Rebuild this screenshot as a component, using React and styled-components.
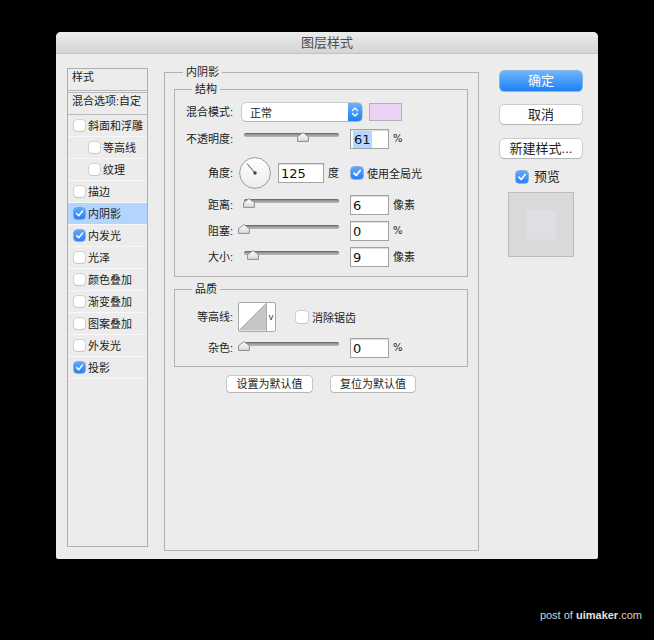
import React from 'react';
import styled, { createGlobalStyle } from 'styled-components';

const Global = createGlobalStyle`
  html, body { margin: 0; padding: 0; background: #000; }
  body { font-family: "Liberation Sans", "Noto Sans CJK SC", sans-serif; color: #222; }
  * { box-sizing: border-box; }
`;

const Screen = styled.div`
  width: 654px; height: 640px; padding: 32px 0 0 56px; background: #000; overflow: hidden;
`;

const Window = styled.div`
  width: 542px; height: 527px; background: #ececec; border-radius: 5px 5px 2px 2px;
  display: flex; flex-direction: column; overflow: hidden;
`;

const TitleBar = styled.div`
  height: 22px; flex: none; border-bottom: 1px solid #c2c2c2;
  background: linear-gradient(#ececec, #d4d4d4);
  display: flex; align-items: center; justify-content: center;
  font-size: 13px; color: #4d4d4d; line-height: 16px;
`;

const Body = styled.div`
  display: flex; align-items: flex-start; padding: 10px 0 0 11px;
`;

/* ---------- left list ---------- */
const StyleList = styled.div`
  width: 81px; height: 479px; margin-top: 4px; flex: none;
  border: 1px solid #aeaeae; display: flex; flex-direction: column;
`;
const ListHeader = styled.div`
  height: 22px; padding-left: 4px; font-size: 11px; line-height: 16px;
  border-bottom: 1px solid #b9b9b9;
`;
const BlendRow = styled.div`
  height: 23px; margin-top: 1px; padding: 0 0 0 4px; font-size: 11px; line-height: 16px;
  border-top: 1px solid #b9b9b9; border-bottom: 1px solid #b9b9b9; white-space: nowrap;
`;
const ListItem = styled.div`
  height: 22px; display: flex; align-items: center; gap: 3px;
  padding-left: ${p => (p.$indent ? 21 : 6)}px;
  background: ${p => (p.$active ? '#b3d4fc' : 'transparent')};
  border-bottom: 1px solid #f7f7f7;
  font-size: 11px; line-height: 14px; white-space: nowrap;
`;

const Box = styled.span`
  width: ${p => p.$s}px; height: ${p => p.$s}px; flex: none; border-radius: 3px;
  display: inline-flex; align-items: center; justify-content: center;
  background: ${p => (p.$on ? 'linear-gradient(#5ea8fb, #2a80f5)' : '#fff')};
  box-shadow: ${p => (p.$on ? '0 0 0 0.5px #2e76d6' : '0 0 0 0.5px #b4b4b4, 0 1px 1px rgba(0,0,0,0.08)')};
`;

const Check = ({ on, s = 11 }) => (
  <Box $on={on} $s={s}>
    {on && (
      <svg width={s} height={s} viewBox="0 0 12 12">
        <path d="M3 6.2 L5.2 8.5 L9.2 3.4" fill="none" stroke="#fff" strokeWidth="1.7" strokeLinecap="round" strokeLinejoin="round" />
      </svg>
    )}
  </Box>
);

/* ---------- middle panel ---------- */
const Group = styled.fieldset`
  margin: ${p => p.$mt ?? 0}px 0 0 ${p => p.$ml ?? 0}px; min-width: 0;
  border: 1px solid #b2b2b2;
  padding: ${p => p.$pad};
  ${p => (p.$w ? `width: ${p.$w}px;` : '')}
  ${p => (p.$h ? `height: ${p.$h}px;` : '')}
  display: flex; flex-direction: column;
`;
const Legend = styled.legend`
  margin-left: ${p => p.$ml}px; padding: 0 3px; font-size: 11px; line-height: 16px; color: #222;
`;

const Row = styled.div`
  display: flex; align-items: center; height: ${p => p.$h}px; margin-top: ${p => p.$mt}px;
`;
const Label = styled.span`
  width: 52px; flex: none; text-align: right; font-size: 11px; line-height: 14px; white-space: nowrap;
`;
const Unit = styled.span`
  margin-left: ${p => p.$ml ?? 4}px; font-size: ${p => p.$fs ?? 11}px; line-height: 14px;
  font-family: ${p => (p.$latin ? '"DejaVu Sans", sans-serif' : 'inherit')}; white-space: nowrap;
`;

const Select = styled.div`
  width: 120px; height: 18px; margin-left: 9px; border-radius: 4px; background: #fff;
  box-shadow: 0 0 0 0.5px rgba(0,0,0,0.28), 0 1px 1px rgba(0,0,0,0.12);
  display: flex; align-items: center; font-size: 11px; padding-left: 8px;
`;
const SelectText = styled.span` flex: 1; `;
const Stepper = styled.span`
  width: 14px; height: 18px; border-radius: 0 4px 4px 0;
  background: linear-gradient(#6cb3fa, #1d7ff6);
  display: flex; align-items: center; justify-content: center;
`;
const Swatch = styled.div`
  width: 33px; height: 18px; margin-left: 7px; background: #e9d2f6; border: 1px solid #b3b3b3;
`;

const Field = styled.div`
  width: ${p => p.$w ?? 39}px; height: 20px; margin-left: ${p => p.$ml ?? 11}px; flex: none;
  background: #fff; border: 1px solid #a3a3a3; box-shadow: inset 0 1px 1px rgba(0,0,0,0.14);
  display: flex; align-items: center; padding-left: 2px;
  font-family: "DejaVu Sans", sans-serif; font-size: 13px; color: #111;
`;
const Selected = styled.span`
  background: #b3d7ff; padding: 0 1px; line-height: 17px;
`;

const SliderBox = styled.div`
  width: 95px; height: 20px; margin-left: 11px; padding-top: 4px; flex: none; align-self: center;
`;
const Track = styled.div`
  position: relative; height: 4px; border-radius: 2px;
  background: linear-gradient(#858585, #b9b9b9);
  box-shadow: inset 0 1px 1px rgba(0,0,0,0.25);
`;
const Thumb = styled.svg`
  position: absolute; top: -1px;
`;

const Slider = ({ pos }) => (
  <SliderBox>
    <Track>
      <Thumb width="12" height="10" viewBox="0 0 12 10" style={{ left: pos - 6 }}>
        <defs>
          <linearGradient id="tg" x1="0" y1="0" x2="0" y2="1">
            <stop offset="0" stopColor="#fdfdfd" />
            <stop offset="1" stopColor="#d9d9d9" />
          </linearGradient>
        </defs>
        <path d="M6 0.6 L11.4 4.6 L11.4 9.4 L0.6 9.4 L0.6 4.6 Z" fill="url(#tg)" stroke="#8c8c8c" strokeWidth="1" strokeLinejoin="round" />
      </Thumb>
    </Track>
  </SliderBox>
);

const Dial = styled.svg` margin-left: 6px; flex: none; `;

const Contour = styled.div`
  width: 38px; height: 30px; margin-left: 5px; display: flex; border: 1px solid #a9a9a9;
  border-radius: 2px; background: #fff; overflow: hidden;
`;
const ContourArrow = styled.span`
  width: 9px; border-left: 1px solid #a9a9a9; display: flex; align-items: center; justify-content: center;
  font-size: 9px; color: #333;
`;

const Ghost = styled.div`
  margin-left: ${p => p.$ml ?? 0}px; display: flex; align-items: center; gap: 4px; font-size: 11px;
`;

const ButtonRow = styled.div`
  display: flex; justify-content: center; gap: 19px; margin-top: 9px;
`;
const SmallButton = styled.div`
  width: ${p => p.$w}px; height: 16px; border-radius: 3px; background: #fff;
  box-shadow: 0 0 0 0.5px rgba(0,0,0,0.3), 0 1px 1px rgba(0,0,0,0.1);
  display: flex; align-items: center; justify-content: center; font-size: 11px; line-height: 14px;
`;

/* ---------- right column ---------- */
const Side = styled.div`
  width: 82px; margin: 7px 0 0 21px; display: flex; flex-direction: column; flex: none;
`;
const Button = styled.div`
  height: ${p => p.$h ?? 19}px; margin-top: ${p => p.$mt ?? 0}px; border-radius: 4px;
  background: ${p => (p.$primary ? 'linear-gradient(#6fb5fb, #1e7ff8)' : '#fff')};
  color: ${p => (p.$primary ? '#fff' : '#222')};
  box-shadow: ${p => (p.$primary ? '0 0 0 0.5px #2a7de0' : '0 0 0 0.5px rgba(0,0,0,0.28), 0 1px 1px rgba(0,0,0,0.12)')};
  display: flex; align-items: center; justify-content: center; font-size: 13px; line-height: 16px;
`;
const PreviewToggle = styled.div`
  display: flex; align-items: center; gap: 6px; margin: 13px 0 0 16px; font-size: 13px; line-height: 16px; height: 12px;
`;
const PreviewBox = styled.div`
  width: 66px; height: 65px; margin: 9px 0 0 8px; background: #d9d9d9; border: 1px solid #bcbcbc;
  display: flex; align-items: center; justify-content: center;
`;
const PreviewSquare = styled.div`
  width: 32px; height: 32px; background: #e0dde3; box-shadow: inset 0 0 3px #d8cde4;
`;

const Watermark = styled.div`
  margin-top: 49px; padding-right: 12px; text-align: right; font-size: 11px; line-height: 14px;
  color: #d2d2d2; font-family: "Liberation Sans", sans-serif;
  b { font-weight: bold; color: #e0e0e0; }
`;

const layers = [
  { label: '斜面和浮雕' },
  { label: '等高线', indent: true },
  { label: '纹理', indent: true },
  { label: '描边' },
  { label: '内阴影', checked: true, active: true },
  { label: '内发光', checked: true },
  { label: '光泽' },
  { label: '颜色叠加' },
  { label: '渐变叠加' },
  { label: '图案叠加' },
  { label: '外发光' },
  { label: '投影', checked: true },
];

const a = (130 * Math.PI) / 180;
const dx = 16 + 12.5 * Math.cos(a);
const dy = 16 - 12.5 * Math.sin(a);

export default function App() {
  return (
    <Screen>
      <Global />
      <Window>
        <TitleBar>图层样式</TitleBar>
        <Body>
          <StyleList>
            <ListHeader>样式</ListHeader>
            <BlendRow>混合选项:自定</BlendRow>
            {layers.map(l => (
              <ListItem key={l.label} $indent={l.indent} $active={l.active}>
                <Check on={l.checked} />
                {l.label}
              </ListItem>
            ))}
          </StyleList>

          <Group $w={315} $h={487} $ml={16} $pad="0 10px 0 9px">
            <Legend $ml={9}>内阴影</Legend>
            <Group $mt={1} $pad="0 0 9px 6px">
              <Legend $ml={11}>结构</Legend>
              <Row $h={18} $mt={6}>
                <Label>混合模式:</Label>
                <Select>
                  <SelectText>正常</SelectText>
                  <Stepper>
                    <svg width="8" height="12" viewBox="0 0 8 12">
                      <path d="M1.5 4.5 L4 2 L6.5 4.5 M1.5 7.5 L4 10 L6.5 7.5" fill="none" stroke="#fff" strokeWidth="1.3" strokeLinecap="round" strokeLinejoin="round" />
                    </svg>
                  </Stepper>
                </Select>
                <Swatch />
              </Row>
              <Row $h={20} $mt={8}>
                <Label>不透明度:</Label>
                <Slider pos={59} />
                <Field><Selected>61</Selected></Field>
                <Unit $latin $fs={10}>%</Unit>
              </Row>
              <Row $h={32} $mt={8}>
                <Label>角度:</Label>
                <Dial width="32" height="32" viewBox="0 0 32 32">
                  <defs>
                    <linearGradient id="dg" x1="0" y1="0" x2="0" y2="1">
                      <stop offset="0" stopColor="#ffffff" />
                      <stop offset="1" stopColor="#ececec" />
                    </linearGradient>
                  </defs>
                  <circle cx="16" cy="16" r="15.4" fill="url(#dg)" stroke="#9a9a9a" strokeWidth="1" />
                  <line x1="16" y1="16" x2={dx} y2={dy} stroke="#555" strokeWidth="1" />
                  <circle cx="16" cy="16" r="1.7" fill="#444" />
                </Dial>
                <Field $w={46} $ml={7}>125</Field>
                <Unit>度</Unit>
                <Ghost $ml={12}>
                  <Check on s={12} />
                  使用全局光
                </Ghost>
              </Row>
              <Row $h={20} $mt={6}>
                <Label>距离:</Label>
                <Slider pos={5} />
                <Field>6</Field>
                <Unit>像素</Unit>
              </Row>
              <Row $h={20} $mt={6}>
                <Label>阻塞:</Label>
                <Slider pos={-0.5} />
                <Field>0</Field>
                <Unit $latin $fs={10}>%</Unit>
              </Row>
              <Row $h={20} $mt={6}>
                <Label>大小:</Label>
                <Slider pos={9} />
                <Field>9</Field>
                <Unit>像素</Unit>
              </Row>
            </Group>

            <Group $mt={4} $pad="0 0 8px 6px">
              <Legend $ml={11}>品质</Legend>
              <Row $h={30} $mt={5}>
                <Label>等高线:</Label>
                <Contour>
                  <svg width="28" height="28" viewBox="0 0 28 28">
                    <polygon points="0,28 28,0 28,28" fill="#c6c6c6" />
                    <line x1="0" y1="28" x2="28" y2="0" stroke="#9a9a9a" strokeWidth="1" />
                  </svg>
                  <ContourArrow>v</ContourArrow>
                </Contour>
                <Ghost $ml={20}>
                  <Check on={false} s={12} />
                  消除锯齿
                </Ghost>
              </Row>
              <Row $h={20} $mt={6}>
                <Label>杂色:</Label>
                <Slider pos={-0.5} />
                <Field>0</Field>
                <Unit $latin $fs={10}>%</Unit>
              </Row>
            </Group>

            <ButtonRow>
              <SmallButton $w={85}>设置为默认值</SmallButton>
              <SmallButton $w={84}>复位为默认值</SmallButton>
            </ButtonRow>
          </Group>

          <Side>
            <Button $primary $h={20}>确定</Button>
            <Button $mt={14}>取消</Button>
            <Button $mt={15}>新建样式...</Button>
            <PreviewToggle>
              <Check on s={12} />
              预览
            </PreviewToggle>
            <PreviewBox>
              <PreviewSquare />
            </PreviewBox>
          </Side>
        </Body>
      </Window>
      <Watermark>
        post of <b>uimaker</b>.com
      </Watermark>
    </Screen>
  );
}
